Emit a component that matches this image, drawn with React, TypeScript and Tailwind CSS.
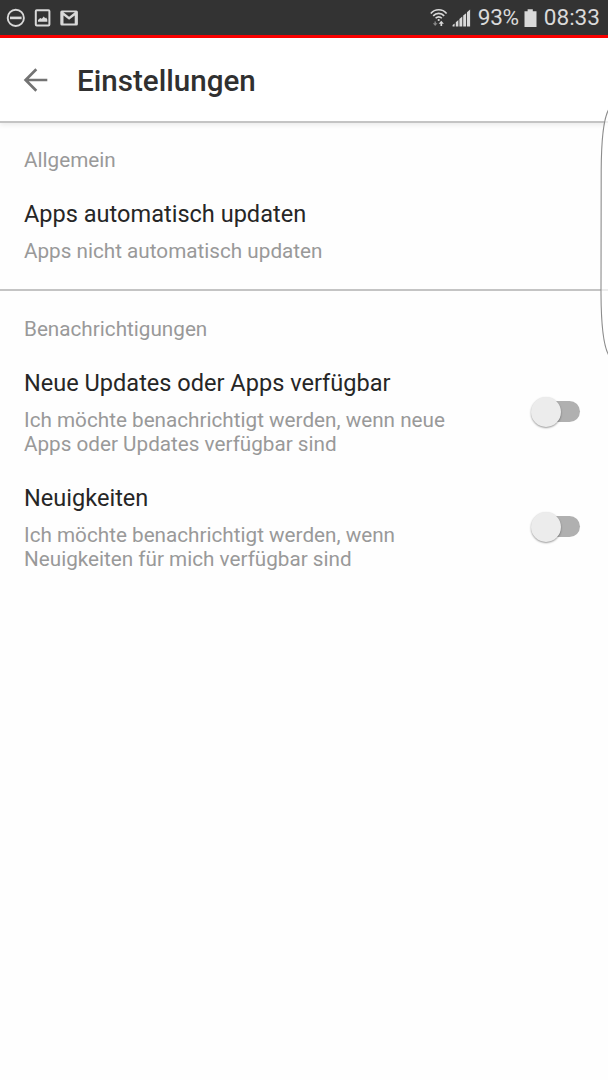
import { useState } from "react";

interface SettingRowProps {
  title: string;
  lines: string[];
  checked?: boolean;
  onToggle?: () => void;
}

function StatusBar() {
  return (
    <div className="flex h-[35px] items-center justify-between bg-[#333333] text-[#d9d9d9]">
      <div className="flex items-center pl-[6px]">
        <svg width="20" height="20" viewBox="0 0 20 20" fill="none" stroke="currentColor">
          <circle cx="9.8" cy="9.9" r="8.1" strokeWidth="1.9" />
          <path d="M4 9.9h11.6" strokeWidth="2.6" />
        </svg>
        <svg className="ml-[8px]" width="18" height="18" viewBox="0 0 18 18">
          <rect x="1.8" y="1.2" width="13.6" height="15.2" rx="1" fill="none" stroke="currentColor" strokeWidth="2" />
          <path d="M4 12.8V11l2.2-2 1.6.8 2-2.4 1.4 1.8.9-.6 1.2 2v2.2z" fill="currentColor" />
        </svg>
        <svg className="ml-[8px]" width="19" height="16" viewBox="0 0 19 16">
          <rect x="0.3" y="0.6" width="17.6" height="14.8" rx="1.5" fill="currentColor" />
          <path d="M3.5 13.6V5.4l5.6 4.4 5.6-4.4v8.2z" fill="#333333" />
          <path d="M3.4 2.2h11.4L9.1 6.8z" fill="#333333" />
        </svg>
      </div>
      <div className="flex items-center pr-[8px]">
        <svg width="18" height="20" viewBox="0 0 18 20" fill="none" stroke="currentColor" strokeWidth="1.6">
          <path d="M0.8 5.4C5 .5 12.4.5 16.6 5.4" />
          <path d="M3.2 7.9C6.2 4.5 11.2 4.5 14.2 7.9" />
          <path d="M5.6 10.3C7.4 8.4 10 8.4 11.8 10.3" />
          <circle cx="8.7" cy="12" r="1.1" fill="currentColor" stroke="none" />
          <path d="M5.2 13.4v2.6" stroke="#8a8a8a" strokeWidth="1.4" />
          <path d="M2.9 15.2h4.6l-2.3 2.9z" fill="#8a8a8a" stroke="none" />
          <path d="M11.3 18v-2.8" strokeWidth="1.7" />
          <path d="M8.7 15.8h5.2l-2.6-3z" fill="currentColor" stroke="none" />
        </svg>
        <svg className="ml-[4px]" width="19" height="19" viewBox="0 0 19 19" fill="currentColor">
          <path d="M0.6 18.4v-1.4l2-1.6v3z" />
          <path d="M3.8 18.4v-4.2l2.6-2.2v6.4z" />
          <path d="M7.4 18.4v-7.4l2.9-2.4v9.8z" />
          <path d="M11.2 18.4V7.6l2.9-2.4v13.2z" />
          <path d="M15 18.4V4.2L18.1 1.4v17z" />
        </svg>
        <span className="ml-[7px] w-[41px] text-[22.6px] leading-[26px] tracking-[-0.3px] whitespace-nowrap">93%</span>
        <svg className="ml-[5px]" width="13" height="18" viewBox="0 0 13 18" fill="currentColor">
          <path d="M3.6 0.3h5.2v2h3.7V18H0.5V2.3h3.1z" />
        </svg>
        <span className="ml-[7px] text-[22.6px] leading-[26px] whitespace-nowrap">08:33</span>
      </div>
    </div>
  );
}

function SettingRow({ title, lines, checked, onToggle }: SettingRowProps) {
  return (
    <div className="flex items-start justify-between">
      <div>
        <p className="text-[23.55px] leading-[28px] text-[#262626]">{title}</p>
        <div className="mt-[11px] mb-px text-[20.7px] leading-[24px] text-[#999999]">
          {lines.map((line) => (
            <p key={line}>{line}</p>
          ))}
        </div>
      </div>
      {onToggle && (
        <button
          role="switch"
          aria-checked={checked}
          aria-label={title}
          className="mt-[27px] flex h-[31px] w-[50px] items-center"
          onClick={onToggle}
        >
          <span className="ml-[7px] flex h-[21px] w-[43px] items-center rounded-full bg-[#b0b0b0]">
            <span
              className={
                checked
                  ? "ml-[13px] h-[30px] w-[30px] shrink-0 rounded-full bg-[#ececec] shadow-[0_1px_2px_rgba(0,0,0,0.4)]"
                  : "-ml-[6px] h-[30px] w-[30px] shrink-0 rounded-full bg-[#ececec] shadow-[0_1px_2px_rgba(0,0,0,0.4)]"
              }
            />
          </span>
        </button>
      )}
    </div>
  );
}

export default function App() {
  const [updates, setUpdates] = useState(false);
  const [news, setNews] = useState(false);

  return (
    <div className="relative h-[1080px] w-[608px] overflow-hidden bg-[#fefefe] font-[Roboto,sans-serif]">
      <StatusBar />
      <div className="h-[3px] bg-[#fa0000]" />

      <header className="flex h-[85px] items-center border-b-2 border-[#c4c4c4] bg-white pl-[23px] shadow-[0_2px_5px_rgba(0,0,0,0.08)]">
        <button aria-label="Zurück">
          <svg width="25" height="24" viewBox="0 0 25 24" fill="none" stroke="#737373" strokeWidth="2.7">
            <path d="M24.3 12H2.5M13.3 1.2L2.6 12l10.7 10.8" />
          </svg>
        </button>
        <h1 className="mt-[3px] ml-[29px] text-[29.6px] leading-[34px] font-medium text-[#303030]">Einstellungen</h1>
      </header>

      <section className="h-[166px] px-[24px] pt-[25px]">
        <h2 className="mb-[28px] text-[20.7px] leading-[24px] text-[#999999]">Allgemein</h2>
        <SettingRow title="Apps automatisch updaten" lines={["Apps nicht automatisch updaten"]} />
      </section>

      <section className="border-t-2 border-[#c4c4c4] pt-[26px] pr-[28px] pl-[24px]">
        <h2 className="mb-[28px] text-[20.7px] leading-[24px] text-[#999999]">Benachrichtigungen</h2>
        <div className="flex flex-col gap-[27px]">
          <SettingRow
            title="Neue Updates oder Apps verfügbar"
            lines={["Ich möchte benachrichtigt werden, wenn neue", "Apps oder Updates verfügbar sind"]}
            checked={updates}
            onToggle={() => setUpdates(!updates)}
          />
          <SettingRow
            title="Neuigkeiten"
            lines={["Ich möchte benachrichtigt werden, wenn", "Neuigkeiten für mich verfügbar sind"]}
            checked={news}
            onToggle={() => setNews(!news)}
          />
        </div>
      </section>

      {/* Edge panel handle */}
      <svg className="absolute top-[106px] right-0" width="8" height="252" viewBox="0 0 8 252">
        <path
          d="M9 3C4 11 1.4 28 1.2 64L1 188c.2 36 3 54 8.2 62z"
          fill="#ffffff"
          fillOpacity="0.7"
          stroke="#8c8c8c"
          strokeWidth="1.1"
        />
      </svg>
    </div>
  );
}
